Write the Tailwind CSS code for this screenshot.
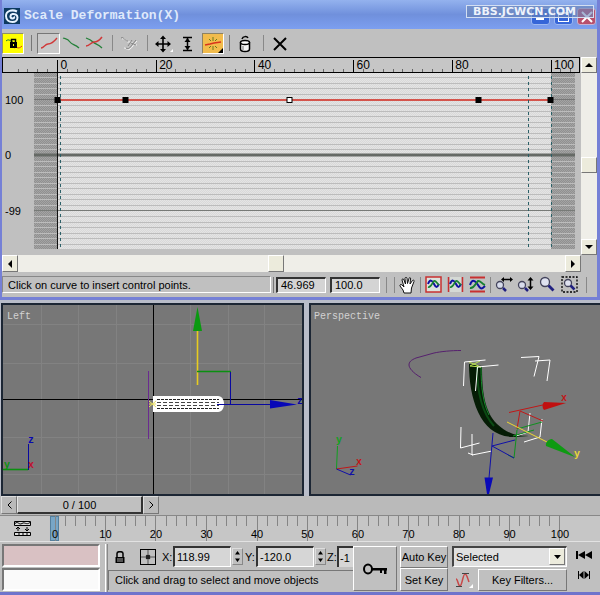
<!DOCTYPE html>
<html lang="en">
<head>
  <meta charset="UTF-8" />
  <meta name="viewport" content="width=device-width,initial-scale=1" />
  <title>Scale Deformation(X)</title>
  <script src="https://cdn.jsdelivr.net/npm/@tailwindcss/browser@4"></script>
</head>
<body class="bg-[#c0c0c0] text-black text-[11px] leading-4 font-['Liberation_Sans',Arial,sans-serif] overflow-x-hidden">

  <!-- Deformation window ---------------------------------------------------->
  <section class="border-l-2 border-r-3 border-b-3 border-[#7580d6] bg-[#c0c0c0]">

    <!-- Title bar -->
    <header class="relative h-[29px] flex items-center gap-1 pl-0.5 pr-px pt-0.5 bg-linear-to-b from-[#94b2ee] via-[#7090dc] to-[#7c9ff0]">
      <svg class="w-4 h-4 shrink-0" viewBox="0 0 16 16">
        <rect width="16" height="16" fill="#0d3a60"/>
        <path d="M13 3.500C8 1 2 3 2 8c0 4 3 6 6.500 6 3 0 5-2 5-4.500S11 5.500 8.500 6 5.500 10 8.500 10.500c1.500 0 2-1 1.500-2" fill="none" stroke="#e8f4ff" stroke-width="2"/>
      </svg>
      <h1 class="flex-1 font-['Liberation_Mono',monospace] font-bold text-[13px] text-[#dfe9fb]">Scale Deformation(X)</h1>
      <div class="flex gap-1 self-end pb-1">
        <button aria-label="Minimize" class="w-[19px] h-[17px] rounded-[3px] border border-[#9db8f2] bg-[#3565d8] flex items-end pl-1 pb-1"><span class="w-2 h-[3px] bg-white"></span></button>
        <button aria-label="Maximize" class="w-[19px] h-[17px] rounded-[3px] border border-[#9db8f2] bg-[#3565d8] flex items-center justify-center"><span class="w-[11px] h-[10px] border border-t-2 border-white"></span></button>
        <button aria-label="Close" class="w-[19px] h-[17px] rounded-[3px] border border-[#c9b0d0] bg-[#b8506c] flex items-center justify-center">
          <svg class="w-3 h-3" viewBox="0 0 12 12"><path d="M1 1l10 10M11 1L1 11" stroke="#fff" stroke-width="2"/></svg>
        </button>
      </div>
      <div class="absolute right-[3px] top-[5px] w-32 h-[13px] border border-[#d3dff2] flex items-center bg-[#6b86b8]/60 pl-1.5 font-['DejaVu_Sans',sans-serif] font-bold text-[11px] text-[#eef3fb]">BBS.JCWCN.COM</div>
    </header>

    <!-- Toolbar -->
    <div class="h-7 flex items-center" role="toolbar">
      <button aria-label="Make symmetrical" class="w-[22px] h-[21px] bg-[#ffff00] border border-[#8f8f6a] border-b-white border-r-white">
        <svg class="w-5 h-[19px]" viewBox="0 0 20 19"><path d="M3 7c3-3 5 1 7 1" fill="none" stroke="#208030"/><path d="M11 14c3-2 4 2 8-2" fill="none" stroke="#e03020"/><rect x="7" y="8" width="7" height="6"/><path d="M8.500 8V5.500h4V8" fill="none" stroke="#000" stroke-width="1.500"/><path d="M10 10h1v2h-1z" fill="#ff0"/></svg>
      </button>
      <span class="w-px h-4 bg-[#777] ml-[7px] mr-[5px]"></span>
      <button aria-label="Display X axis" class="w-[23px] h-[21px] bg-[#c9c9c9] border border-[#777] border-b-white border-r-white">
        <svg class="w-[21px] h-[19px]" viewBox="0 0 21 19"><path d="M3 14c3 0 4-4 7-4s5-1 9-6" fill="none" stroke="#d03838" stroke-width="1.300"/></svg>
      </button>
      <button aria-label="Display Y axis" class="w-[23px] h-[21px]">
        <svg class="w-[23px] h-[21px]" viewBox="0 0 23 21"><path d="M3 5c3 1 5 1 7 4s5 2 9 6" fill="none" stroke="#25803a" stroke-width="1.300"/></svg>
      </button>
      <button aria-label="Display XY axes" class="w-[23px] h-[21px]">
        <svg class="w-[23px] h-[21px]" viewBox="0 0 23 21"><path d="M3 5c3 1 5 2 7 4s5 2 9 6" fill="none" stroke="#25803a" stroke-width="1.300"/><path d="M3 13c4 0 5-4 8-4s5-1 8-5" fill="none" stroke="#d03838" stroke-width="1.500"/></svg>
      </button>
      <span class="w-px h-4 bg-[#888] ml-[6px] mr-[5px]"></span>
      <button aria-label="Swap curves" class="w-[23px] h-[21px]">
        <svg class="w-[23px] h-[21px]" viewBox="0 0 23 21"><path d="M4 6c3-2 4 4 7 3s4 3 8 3M6 15c3 0 3 3 6 1s3-4 7-8" fill="none" stroke="#f4f4f4"/><path d="M3 5c3-2 4 4 7 3M13 10l5 2M8 15c3 2 4-1 6-3l4-5M10 13l4-6" fill="none" stroke="#858585"/></svg>
      </button>
      <span class="w-px h-4 bg-[#888] ml-[6px] mr-[6px]"></span>
      <button aria-label="Move control point" class="w-5 h-[21px]">
        <svg class="w-5 h-[21px]" viewBox="0 0 20 21"><path d="M9 4v14M2 11h14" stroke="#000" stroke-width="1.600"/><path d="M9 2.500l3 3.500H6zM9 19.500L6 16h6zM1 11l3.500-3v6zM17 11l-3.500-3v6z"/><path d="M19 16v3h-3z" fill="#fff"/></svg>
      </button>
      <button aria-label="Scale control point" class="w-5 h-[21px] ml-1">
        <svg class="w-5 h-[21px]" viewBox="0 0 20 21"><path d="M5 4.500h9M5 17.500h9M9.500 5v12" stroke="#000" stroke-width="1.500"/><path d="M9.500 5l3 4h-6zM9.500 17l-3-4h6z"/></svg>
      </button>
      <button aria-label="Insert corner point" class="w-[22px] h-[21px] ml-1 bg-[#f2bc4c] border border-[#8d8264] border-b-white border-r-white">
        <svg class="w-5 h-[19px]" viewBox="0 0 20 19"><path d="M10 3v4M10 12v4M6 5l2 2M14 5l-2 2M6 14l2-2M14 14l-2-2" stroke="#6d7a1c"/><path d="M2 11l5-1 4-1 7-1" fill="none" stroke="#d8341c" stroke-width="1.500"/><path d="M20 14v5h-5z"/></svg>
      </button>
      <span class="w-px h-4 bg-[#777] ml-[5px] mr-[5px]"></span>
      <button aria-label="Delete control point" class="w-5 h-[21px]">
        <svg class="w-5 h-[21px]" viewBox="0 0 20 21"><path d="M5.500 10h9v6c0 1.500-2 2.500-4.500 2.500s-4.500-1-4.500-2.500z" fill="#f4f4f4" stroke="#000" stroke-width="1.500"/><ellipse cx="10" cy="9.500" rx="4.500" ry="2" fill="#fff" stroke="#000" stroke-width="1.500"/><path d="M7 6c1-3 5-3 6-1" fill="none" stroke="#000" stroke-width="1.500"/><path d="M8 13v4" stroke="#777"/></svg>
      </button>
      <span class="w-px h-4 bg-[#888] ml-2 mr-[6px]"></span>
      <button aria-label="Reset curve" class="w-5 h-[21px]">
        <svg class="w-5 h-[21px]" viewBox="0 0 20 21"><path d="M4 5l12 12M16 5L4 17" stroke="#000" stroke-width="2"/></svg>
      </button>
    </div>

    <!-- Ruler, curve and vertical scroll bar -->
    <div class="flex">
      <div class="flex-1 min-w-0">
        <svg id="ruler" class="block w-full h-4 bg-[#c6c6c6] outline outline-1 -outline-offset-1 outline-black text-[12px]"></svg>
        <svg id="plot" class="block w-full h-[182px]">
          <defs>
            <pattern id="light" width="2" height="2" patternUnits="userSpaceOnUse"><rect width="2" height="2" fill="#e4e4e4"/><path d="M0 0h1v1H0zM1 1h1v1H1z" fill="#d9d9d9"/></pattern>
            <pattern id="dark" width="2" height="2" patternUnits="userSpaceOnUse"><rect width="2" height="2" fill="#a4a4a4"/><path d="M0 0h1v1H0zM1 1h1v1H1z" fill="#909090"/></pattern>
          </defs>
        </svg>
      </div>
      <div class="w-[17px] flex flex-col bg-[#efeee8] border-l border-[#c0c0c0]">
        <button aria-label="Scroll up" class="h-4 bg-[#ecebdc] border border-white border-b-[#777] border-r-[#777] flex items-center justify-center"><svg class="w-2 h-1" viewBox="0 0 8 4"><path d="M4 0l4 4H0z"/></svg></button>
        <div class="flex-1 flex flex-col justify-center pt-[18px]"><div class="h-4 bg-[#ecebdc] border border-white border-b-[#777] border-r-[#777]"></div></div>
        <button aria-label="Scroll down" class="h-4 bg-[#ecebdc] border border-white border-b-[#777] border-r-[#777] flex items-center justify-center"><svg class="w-2 h-1" viewBox="0 0 8 4"><path d="M0 0h8L4 4z"/></svg></button>
      </div>
    </div>

    <!-- Horizontal scroll bar -->
    <div class="h-[17px] flex pr-4">
      <button aria-label="Scroll left" class="w-4 bg-[#ecebdc] border border-white border-b-[#777] border-r-[#777] flex items-center justify-center"><svg class="w-1 h-2" viewBox="0 0 4 8"><path d="M4 0v8L0 4z"/></svg></button>
      <div class="flex-1 flex justify-center bg-[#efeee8] pr-8"><div class="w-4 bg-[#ecebdc] border border-white border-b-[#777] border-r-[#777]"></div></div>
      <button aria-label="Scroll right" class="w-4 bg-[#ecebdc] border border-white border-b-[#777] border-r-[#777] flex items-center justify-center"><svg class="w-1 h-2" viewBox="0 0 4 8"><path d="M0 0l4 4-4 4z"/></svg></button>
    </div>

    <!-- Status line -->
    <div class="h-[25px] flex items-center pr-[10px]">
      <p class="flex-1 h-[17px] border border-[#888] border-b-white border-r-white pl-[5px] whitespace-nowrap">Click on curve to insert control points.</p>
      <span class="w-px h-4 bg-[#777] mx-0.5"></span>
      <input aria-label="Position" value="46.969" class="w-[50px] h-4 bg-[#d4d4d4] border-t-2 border-l-2 border-[#333] border-r border-b border-r-white border-b-white pl-[3px]">
      <input aria-label="Amount" value="100.0" class="w-[50px] h-4 ml-1 bg-[#d4d4d4] border-t-2 border-l-2 border-[#333] border-r border-b border-r-white border-b-white pl-[3px]">
      <span class="w-px h-4 bg-[#888] ml-[6px] mr-[7px]"></span>
      <span class="w-px h-4 bg-[#888] mr-1"></span>
      <button aria-label="Pan"><svg class="w-[17px] h-[18px]" viewBox="0 0 17 18"><path d="M5 17l-1-3-3-4c-.500-1.500 1-2 2-1l2 2-2-7c0-1.500 1.500-1.500 2 0l1.500 4L6 2.500C6 1 8 1 8 2.500l.500 5L10 2.500c.500-1.500 2-1 1.500.500L11 8l2.500-3.500c1-1 2 0 1.500 1L12.500 12 12 17z" fill="#fff" stroke="#111"/></svg></button>
      <span class="w-px h-4 bg-[#888] mx-1"></span>
      <button aria-label="Zoom extents"><svg class="w-[17px] h-[17px]" viewBox="0 0 17 17"><rect x="1" y="1" width="15" height="15" fill="#dce2dc" stroke="#c83030" stroke-width="1.500"/><path d="M3 8c2-5 4-4 6 0s3 4 5 0" fill="none" stroke="#1010a0" stroke-width="2"/><path d="M3 11c3 1 4-4 6-6 2-1 3 3 5 4" fill="none" stroke="#188030" stroke-width="1.700"/></svg></button>
      <button aria-label="Zoom horizontal extents" class="ml-[5px]"><svg class="w-[17px] h-[17px]" viewBox="0 0 17 17"><path d="M1.500 1v15M15.500 1v15" stroke="#c83030" stroke-width="1.500"/><path d="M3 1h11v15H3z" fill="#d5d9d5"/><path d="M3 8c2-5 4-4 6 0s3 4 5 0" fill="none" stroke="#1010a0" stroke-width="2"/><path d="M3 11c3 1 4-4 6-6 2-1 3 3 5 4" fill="none" stroke="#188030" stroke-width="1.700"/></svg></button>
      <button aria-label="Zoom vertical extents" class="ml-[5px]"><svg class="w-[17px] h-[17px]" viewBox="0 0 17 17"><path d="M1 1.500h15M1 15.500h15" stroke="#c83030" stroke-width="2"/><path d="M1 9c2-6 5-5 8 0s4 4 7 1" fill="none" stroke="#1010a0" stroke-width="2"/><path d="M1 12c4 1 5-4 8-7 2-1 4 3 7 4" fill="none" stroke="#188030" stroke-width="2"/></svg></button>
      <span class="w-px h-4 bg-[#888] mx-1"></span>
      <button aria-label="Zoom horizontally"><svg class="w-[18px] h-[17px]" viewBox="0 0 18 17"><circle cx="5" cy="9" r="3.500" fill="#d8dcec" stroke="#44445c" stroke-width="1.300"/><path d="M8 12l3 3" stroke="#202080" stroke-width="2.500"/><path d="M8 3.500h8" stroke="#000" stroke-width="1.500"/><path d="M6 3.500L9 1v5zM18 3.500L15 1v5z"/></svg></button>
      <button aria-label="Zoom vertically" class="ml-1"><svg class="w-[18px] h-[17px]" viewBox="0 0 18 17"><circle cx="5" cy="9" r="3.500" fill="#d8dcec" stroke="#44445c" stroke-width="1.300"/><path d="M8 12l3 3" stroke="#202080" stroke-width="2.500"/><path d="M13.500 4v8" stroke="#000" stroke-width="1.500"/><path d="M13.500 1l3 3.500h-6zM13.500 14l3-3.500h-6z"/></svg></button>
      <button aria-label="Zoom" class="ml-1"><svg class="w-[17px] h-[17px]" viewBox="0 0 17 17"><circle cx="6" cy="6" r="4.500" fill="#dfe2f0" stroke="#44445c" stroke-width="1.300"/><path d="M9.500 9.500l5 5" stroke="#202080" stroke-width="2.800"/></svg></button>
      <button aria-label="Zoom region" class="ml-[5px]"><svg class="w-[17px] h-[17px]" viewBox="0 0 17 17"><rect x="1" y="1" width="15" height="15" fill="none" stroke="#000" stroke-dasharray="2 1.500" stroke-width="1.300"/><circle cx="7" cy="7" r="3.500" fill="#dfe2f0" stroke="#44445c" stroke-width="1.300"/><path d="M9.500 9.500l4 4" stroke="#202080" stroke-width="2.500"/></svg></button>
      <span class="w-px h-4 bg-[#888] ml-2"></span>
    </div>
  </section>

  <!-- Viewports ------------------------------------------------------------->
  <main class="grid grid-cols-[303fr_291fr] gap-x-[5px] pl-px pt-[3px] bg-[#b9bdc9]">
    <div class="h-[193px] border-2 border-[#1c2634] bg-[#777]">
      <svg class="block w-full h-full font-['Liberation_Mono',monospace] text-[10px]" viewBox="3 305 299 189" preserveAspectRatio="xMinYMin slice">
        <path d="M41.500 305v189M78.500 305v189M116.500 305v189M190.500 305v189M228.500 305v189M264.500 305v189M3 324.500h299M3 363.500h299M3 437.500h299M3 474.500h299" stroke="#828282"/>
        <path d="M153.500 305v189M3 399.500h299" stroke="#000"/>
        <text x="7" y="319" fill="#d2d2d2">Left</text>
        <path d="M148.500 371v68" stroke="#6a2a90"/>
        <path d="M153 396h65c4 0 6 4 6 8s-2 8-6 8h-65z" fill="#fff"/>
        <path d="M157 399.500h62M157 408.500h62" stroke="#222" stroke-dasharray="3 1"/>
        <path d="M157 402.500h62M157 405.500h62" stroke="#444" stroke-dasharray="4 2"/>
        <path d="M149 401l7 6M156 401l-7 6M149 404h7" stroke="#e6dc60"/>
        <path d="M197.500 331v54" stroke="#e8cc20" stroke-width="1.600"/>
        <path d="M197.500 307l4.500 24h-9z" fill="#0a9a10"/>
        <path d="M197 371.500h34" stroke="#0a9010" stroke-width="1.600"/>
        <path d="M230.500 372v32M217 404.500h55" stroke="#0808a0"/>
        <path d="M270 400l27 4.500-27 4z" fill="#0808b8"/>
        <text x="297" y="404" fill="#0808a0" class="font-bold">z</text>
        <path d="M28.500 444v26" stroke="#0808a0"/>
        <path d="M3 469.500h25" stroke="#0a9010" stroke-width="1.600"/>
        <text x="28" y="443" fill="#0808b0" class="font-bold">z</text>
        <text x="28" y="468" fill="#c01030" class="font-bold">x</text>
        <text x="4" y="468" fill="#0a9010" class="font-bold">y</text>
      </svg>
    </div>
    <div class="h-[193px] border-2 border-r-0 border-[#1c2634] bg-[#777]">
      <svg class="block w-full h-full font-['Liberation_Mono',monospace] text-[10px]" viewBox="311 305 289 189" preserveAspectRatio="xMinYMin slice" fill="none">
        <text x="314" y="319" fill="#d2d2d2">Perspective</text>
        <path d="M461 350.500c-10 0-20 1-27 2.500l-18 5c-5 2-7 4-7 7s4 8 12 12.500" stroke="#56206e"/>
        <path d="M469 364c0 36 12 74 46 73l14-1c-14 0-22-3-32-12-13-13-15-34-15-58z" fill="#051c05"/>
        <path d="M477 366c0 28 6 48 17 60" stroke="#0b4a14" stroke-width="2"/>
        <path d="M481 367c0 20 2 36 8 48" stroke="#178a2c"/>
        <path d="M469 362l12 5M480 361l-10 5M470 366l11 1" stroke="#b8e050"/>
        <g stroke="#fff">
          <path d="M463.500 386l1-24 21-2M475.500 391l2-24 21-2"/>
          <path d="M521 357.500l18-1-5 20M535 361l15-1-3 21"/>
          <path d="M461 427l-.500 21 19-5M472 434v21l20-4M468 453l5 2"/>
          <path d="M530 413l-2 19-12 4M542 419l-2 18-16 5"/>
        </g>
        <path d="M509 412.500l36-8M520 411l-3 18M520 411l23 10" stroke="#c01818"/>
        <path d="M544 402l22 1-22 7c-2-2-2-6 0-8z" fill="#c01010"/>
        <path d="M517 429l25-7M513 436l21-6M517 430l-3 28-6-3" stroke="#109020"/>
        <path d="M493 433l-4 45M492 446l23-6M492 446l22 12" stroke="#1010a8"/>
        <path d="M484.500 477.500h8.500l-4 16.500h-2z" fill="#0808b8"/>
        <path d="M507 422l40 20" stroke="#f0d830"/>
        <path d="M546 446c-1-3 2-7 6-7l23 18-3-1z" fill="#0e9a12"/>
        <text x="561" y="401" fill="#c01818" class="font-bold">x</text>
        <text x="574" y="457" fill="#e8d838" class="font-bold">y</text>
        <path d="M336.500 469l1-23" stroke="#10a020"/>
        <path d="M336.500 469l21-3" stroke="#c01818"/>
        <path d="M336.500 469l14 6" stroke="#1010a8"/>
        <text x="336" y="443" fill="#10a020" class="font-bold">y</text>
        <text x="356" y="465" fill="#c01818" class="font-bold">x</text>
        <text x="349" y="475" fill="#1010a8" class="font-bold">z</text>
      </svg>
    </div>
  </main>

  <!-- Time slider ----------------------------------------------------------->
  <div class="h-5 flex items-start pl-px bg-[#bababa] border-b border-[#888]">
    <button aria-label="Previous frame" class="w-4 h-[18px] border border-[#ddd] border-r-[#777] border-b-[#777] flex items-center justify-center"><svg class="w-[5px] h-2" viewBox="0 0 5 8"><path d="M4.500.500L1 4l3.500 3.500" fill="none" stroke="#000"/></svg></button>
    <button class="w-[126px] h-[18px] border border-[#e4e4e4] border-r-2 border-b-2 border-r-[#333] border-b-[#333] bg-[#c0c0c0]">0 / 100</button>
    <button aria-label="Next frame" class="w-4 h-[18px] border border-[#ddd] border-r-[#777] border-b-[#777] flex items-center justify-center"><svg class="w-[5px] h-2" viewBox="0 0 5 8"><path d="M.500.500L4 4 .500 7.500" fill="none" stroke="#000"/></svg></button>
  </div>

  <!-- Track bar -->
  <div class="h-[26px] flex bg-[#c6c6c6] border-b border-[#e2e2e2] pl-[14px]">
    <button aria-label="Open mini curve editor" class="w-[17px]"><svg class="w-[17px] h-[17px]" viewBox="0 0 17 17"><path d="M.500 1.500h16v4H.500zM.500 12.500h16v3H.500z" fill="#ddd" stroke="#000"/><path d="M1 3.500c3-3 4 2 7 0s4 2 8-1M4 14h2m2 0h2m2 0h2" fill="none" stroke="#000"/><path d="M4 11V7M2 9l2-2 2 2M13 7v4M11 9l2 2 2-2" fill="none" stroke="#000"/></svg></button>
    <svg id="track" class="block flex-1 min-w-0 h-[25px]"></svg>
  </div>

  <!-- Bottom controls ------------------------------------------------------->
  <footer class="h-[53px] flex border-b-3 border-[#6f74cc] pl-0.5 pt-0.5 overflow-hidden">
    <div class="w-[98px] shrink-0 flex flex-col gap-px">
      <div class="h-[23px] bg-[#d9c1c3] border-2 border-[#777] border-r-white border-b-white"></div>
      <div class="h-[23px] bg-[#fafafa] border-2 border-[#777] border-r-white border-b-white"></div>
    </div>
    <span class="w-[3px] ml-[5px] border-l border-white border-r border-r-[#888]"></span>

    <div class="flex-1 min-w-[244px] flex flex-col gap-[3px] pt-0.5">
      <div class="h-[21px] flex items-center pl-[7px]">
        <button aria-label="Selection lock" class="mr-[15px]"><svg class="w-[10px] h-3" viewBox="0 0 10 12"><path d="M2 6V2.500C2 0 8 0 8 2.500V6" fill="none" stroke="#000" stroke-width="1.500"/><path d="M.500 6h9v6h-9z"/><path d="M2 8h6M2 10h6" stroke="#aaa"/></svg></button>
        <button aria-label="Absolute mode" class="mr-[6px]"><svg class="w-4 h-4" viewBox="0 0 16 16"><rect x=".500" y=".500" width="15" height="15" fill="none" stroke="#000"/><path d="M8 1v14M1 8h14" stroke="#555" stroke-dasharray="4 1"/><circle cx="8" cy="8" r="2.500" fill="#222"/></svg></button>
        <label for="x" class="w-[11px]">X:</label>
        <input id="x" value="118.99" class="w-[58px] h-[21px] bg-[#d6d6d6] border-t-2 border-l-2 border-[#333] border-r border-b border-r-white border-b-white pl-[2px]">
        <button aria-label="Step X" class="w-[11px] h-[17px] mx-px border border-[#ddd] border-r-[#888] border-b-[#888] flex items-center justify-center"><svg class="w-[5px] h-[11px]" viewBox="0 0 5 11"><path d="M2.500 0L5 3.500H0zM0 7.500h5L2.500 11z"/></svg></button>
        <label for="y" class="w-3 pl-px">Y:</label>
        <input id="y" value="-120.0" class="w-[58px] h-[21px] bg-[#d6d6d6] border-t-2 border-l-2 border-[#333] border-r border-b border-r-white border-b-white pl-[2px]">
        <button aria-label="Step Y" class="w-[11px] h-[17px] mx-px border border-[#ddd] border-r-[#888] border-b-[#888] flex items-center justify-center"><svg class="w-[5px] h-[11px]" viewBox="0 0 5 11"><path d="M2.500 0L5 3.500H0zM0 7.500h5L2.500 11z"/></svg></button>
        <label for="z" class="w-[10px]">Z:</label>
        <input id="z" value="-1" class="flex-1 min-w-0 h-[21px] bg-[#d6d6d6] border-t-2 border-l-2 border-[#333] pl-px">
      </div>
      <p class="h-5 pl-[6px] pt-px border-t border-l border-[#777] whitespace-nowrap overflow-hidden">Click and drag to select and move objects</p>
    </div>

    <button aria-label="Set keys" class="w-11 h-[45px] shrink-0 mt-0.5 border border-white border-r-[#777] border-b-[#777] flex items-center justify-center">
      <svg class="w-[25px] h-3" viewBox="0 0 25 12"><ellipse cx="5" cy="6" rx="4" ry="4.500" fill="none" stroke="#000" stroke-width="2"/><path d="M9 5h15v2.500H9zM17 7h2v3h-2zM21 7h2.500v4H21z"/></svg>
    </button>
    <div class="w-12 shrink-0 flex flex-col ml-[3px] mt-0.5">
      <button class="h-[22px] border border-white border-r-[#777] border-b-[#777] whitespace-nowrap">Auto Key</button>
      <button class="h-[23px] border border-white border-r-[#777] border-b-[#777] whitespace-nowrap">Set Key</button>
    </div>
    <div class="w-[115px] shrink-0 ml-1 mt-0.5 flex flex-col gap-0.5">
      <div class="relative h-[21px]">
        <select aria-label="Key set" class="appearance-none w-full h-[21px] bg-[#e0e0e0] border-t-2 border-l-2 border-[#444] border-r border-b border-r-white border-b-white pl-[2px]"><option>Selected</option></select>
        <span class="pointer-events-none absolute right-0.5 top-0.5 w-4 h-[17px] bg-[#ecebdc] border border-white border-r-[#777] border-b-[#777] flex items-center justify-center"><svg class="w-[7px] h-1" viewBox="0 0 7 4"><path d="M0 0h7L3.500 4z"/></svg></span>
      </div>
      <div class="flex h-[22px]">
        <button aria-label="Default tangents" class="w-[26px] flex items-center pl-[3px]"><svg class="w-[19px] h-4" viewBox="0 0 19 16"><path d="M1 7c2 0 2 7 4 7s3-12 5-12 3 6 4 8" fill="none" stroke="#c84848" stroke-width="1.500"/><path d="M1 14.500h6M7 1.500h7" stroke="#444"/><path d="M18 12v4h-4z" fill="#fff"/></svg></button>
        <button class="flex-1 border border-white border-r-[#777] border-b-[#777]">Key Filters...</button>
      </div>
    </div>
    <div class="w-[33px] shrink-0 flex flex-col items-center gap-3 pt-[7px]">
      <button aria-label="Go to start"><svg class="block w-4 h-2" viewBox="0 0 16 8"><path d="M0 0h2v8H0zM9 0v8L2 4zM16 0v8L9 4z"/></svg></button>
      <button aria-label="Key mode"><svg class="block w-3 h-2" viewBox="0 0 12 8"><path d="M0 0h1v8H0zM5.500 0v8L1 4zM6.500 0L11 4 6.500 8zM11 0h1v8h-1z"/></svg></button>
    </div>
  </footer>

  <script>
  const $ = id => document.getElementById(id);
  const add = (id, html) => $(id).insertAdjacentHTML('beforeend', html);

  /* horizontal position of a path value on the 0-100 scale */
  const W = 578;
  const at = (px, w = W) => (px / w * 100).toFixed(3) + '%';
  const level = u => 55.5 + 4.935 * u;

  /* ruler */
  let s = '';
  for (let u = -8; u <= 104; u += 2) {
    const x = at(level(u)), big = u >= 0 && u <= 100 && u % 20 === 0;
    s += `<line x1="${x}" x2="${x}" y1="${big ? 3 : 12}" y2="15" stroke="${big ? '#000' : '#666'}" shape-rendering="crispEdges"/>`;
    if (big) s += `<text x="${x}" dx="3" y="12">${u}</text>`;
  }
  add('ruler', s);

  /* curve area */
  s = `<rect x="${at(32)}" width="${at(541)}" height="176" fill="url(#dark)"/>
       <rect x="${at(56)}" width="${at(493)}" height="176" fill="url(#light)"/>`;
  for (let i = -16; i <= 14; i++) {
    if (i % 10 === 0) continue;
    const y = Math.round(82 - i * 5.55) + .5;
    s += `<line x1="${at(32)}" x2="${at(573)}" y1="${y}" y2="${y}" stroke="#bcbcbc"/>`;
  }
  s += `<line x1="${at(32)}" x2="${at(573)}" y1="82" y2="82" stroke="#666a66" stroke-width="3"/>
        <line x1="${at(32)}" x2="${at(573)}" y1="137.500" y2="137.500" stroke="#777a77"/>
        <line x1="${at(32)}" x2="${at(573)}" y1="26.500" y2="26.500" stroke="#777"/>
        <line x1="${at(55.5)}" x2="${at(55.5)}" y1="0" y2="176" stroke="#111"/>
        <rect x="${at(55.5)}" y="26" width="${at(493.5)}" height="2" fill="#d4544c"/>`;
  for (const x of [58.5, 526.5, 549.5])
    s += `<line x1="${at(x)}" x2="${at(x)}" y1="3" y2="176" stroke="#2a6068" stroke-dasharray="3 3"/>`;
  for (const x of [55.5, 123.5, 287.5, 476.5, 548.5])
    s += x === 287.5
      ? `<svg x="${at(x)}" y="24" overflow="visible"><rect x="-2.500" y=".500" width="5" height="5" fill="#fff" stroke="#000"/></svg>`
      : `<svg x="${at(x)}" y="24" overflow="visible"><rect x="-3" width="6" height="6"/></svg>`;
  s += `<text x="3" y="31">100</text><text x="3" y="86">0</text><text x="3" y="142">-99</text>`;
  add('plot', s);

  /* track bar */
  const T = 569;
  s = `<rect x="${at(19.5, T)}" y="0.500" width="${at(8, T)}" height="24" fill="#78a6c6" stroke="#557f9c"/>`;
  for (let u = 0; u <= 100; u += 2) {
    const x = at(24 + 5.05 * u, T), big = u % 10 === 0;
    s += `<line x1="${x}" x2="${x}" y1="0" y2="${big ? 25 : 10}" stroke="#858585" shape-rendering="crispEdges"/>`;
    if (big) s += `<text x="${x}" y="22" text-anchor="middle">${u}</text>`;
  }
  add('track', s);
  </script>
</body>
</html>
